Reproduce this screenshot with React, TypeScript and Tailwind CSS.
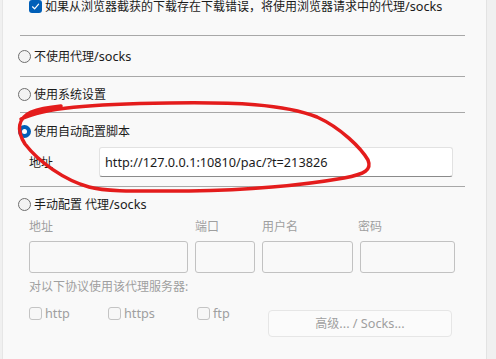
import React from "react";

const font = { fontFamily: '"Noto Sans", "Noto Sans CJK SC", sans-serif' };

function L({ children }: { children: React.ReactNode }) {
  return <span className="text-[12.7px]">{children}</span>;
}

function Radio({ checked }: { checked?: boolean }) {
  if (checked) {
    return (
      <span className="w-[13px] h-[13px] rounded-full bg-[#005fb8] flex items-center justify-center shrink-0">
        <span className="w-[5px] h-[5px] rounded-full bg-white" />
      </span>
    );
  }
  return <span className="w-[13px] h-[13px] rounded-full border border-[#6f6f6f] bg-[#f3f3f3] shrink-0" />;
}

function Box({ checked }: { checked?: boolean }) {
  if (checked) {
    return (
      <span className="w-[13px] h-[13px] rounded-[3px] bg-[#005fb8] flex items-center justify-center shrink-0">
        <svg width="9" height="9" viewBox="0 0 9 9" fill="none">
          <path d="M1.5 4.8 L3.6 6.8 L7.6 2.2" stroke="white" strokeWidth="1.2" strokeLinecap="round" strokeLinejoin="round" />
        </svg>
      </span>
    );
  }
  return <span className="w-[13px] h-[13px] rounded-[3px] border border-[#c4c4c4] bg-[#f7f7f7] shrink-0" />;
}

function Line() {
  return <div className="h-px bg-[#a8a8a8] ml-[17px] mr-[21px]" />;
}

export default function App() {
  return (
    <div className="w-[496px] h-[359px] flex overflow-hidden bg-[#f0f0f0] text-[12px] leading-[13px] text-[#1b1b1b]" style={font}>
      <div className="w-[3px] bg-[#f0f0f0] border-r border-[#e6e6e6]" />
      <div className="flex-1 bg-[#f9f9f9] relative flex flex-col">
        <div className="flex items-center h-[13px] ml-[26px]">
          <Box checked />
          <span className="ml-[3px] whitespace-nowrap">如果从浏览器截获的下载存在下载错误，将使用浏览器请求中的代理<L>/socks</L></span>
        </div>
        <div className="mt-[22px]"><Line /></div>
        <div className="flex items-center mt-[14px] h-[13px] ml-[15px]">
          <Radio />
          <span className="ml-[3px]">不使用代理<L>/socks</L></span>
        </div>
        <div className="mt-[13px]"><Line /></div>
        <div className="flex items-center mt-[11px] h-[13px] ml-[15px]">
          <Radio />
          <span className="ml-[3px]">使用系统设置</span>
        </div>
        <div className="mt-[11px]"><Line /></div>
        <div className="flex items-center mt-[12px] h-[13px] ml-[15px]">
          <Radio checked />
          <span className="ml-[3px]">使用自动配置脚本</span>
        </div>
        <div className="flex items-center mt-[9px] ml-[26px]">
          <span className="w-[70px]">地址</span>
          <div className="w-[354px] h-[30px] bg-white border border-[#e2e2e2] border-b-[#8a8a8a] rounded-[3px] flex items-center px-[5px]">
            <L>http://127.0.0.1:10810/pac/?t=213826</L>
          </div>
        </div>
        <div className="mt-[9px]"><Line /></div>
        <div className="flex items-center mt-[11px] h-[13px] ml-[15px]">
          <Radio />
          <span className="ml-[3px]">手动配置 代理<L>/socks</L></span>
        </div>
        <div className="flex mt-[9px] ml-[26px] text-[#9f9f9f] h-[13px] items-center">
          <span className="w-[166px]">地址</span>
          <span className="w-[67px]">端口</span>
          <span className="w-[96px]">用户名</span>
          <span>密码</span>
        </div>
        <div className="flex mt-[8px] ml-[26px] gap-[7px]">
          <div className="w-[159px] h-[32px] border border-[#c2c2c2] rounded-[3px]" />
          <div className="w-[60px] h-[32px] border border-[#c2c2c2] rounded-[3px]" />
          <div className="w-[91px] h-[32px] border border-[#c2c2c2] rounded-[3px]" />
          <div className="w-[95px] h-[32px] border border-[#c2c2c2] rounded-[3px]" />
        </div>
        <div className="mt-[7px] ml-[26px] h-[13px] flex items-center text-[#9f9f9f]">对以下协议使用该代理服务器:</div>
        <div className="flex items-start ml-[26px] mt-[14px]">
          <div className="flex items-center h-[13px] w-[79px]">
            <Box />
            <span className="ml-[3px] text-[#9f9f9f]"><L>http</L></span>
          </div>
          <div className="flex items-center h-[13px] w-[89px]">
            <Box />
            <span className="ml-[3px] text-[#9f9f9f]"><L>https</L></span>
          </div>
          <div className="flex items-center h-[13px] w-[71px]">
            <Box />
            <span className="ml-[3px] text-[#9f9f9f]"><L>ftp</L></span>
          </div>
          <div className="mt-[3px] w-[184px] h-[27px] border border-[#e6e6e6] rounded-[4px] bg-[#fbfbfb] flex items-center justify-center text-[#9f9f9f]">
            高级<L>... / Socks...</L>
          </div>
        </div>
        <svg className="absolute left-0 top-0 pointer-events-none" width="482" height="359" viewBox="4 0 482 359">
          <path
            d="M22 119 C45 108 90 104 170 103 C235 102 285 104 318 117 C342 128 362 148 369 160 C373 170 366 174 345 178 C305 185 255 190 190 191 C140 191 108 192 90 187 C65 180 40 162 26 144 C17 130 19 118 32 112 C42 108 52 107 62 106"
            fill="none"
            stroke="#e41c1c"
            strokeWidth="3.5"
            strokeLinecap="round"
          />
        </svg>
      </div>
      <div className="w-[10px] bg-[#f0f0f0] border-l border-[#e3e3e3]" />
    </div>
  );
}
